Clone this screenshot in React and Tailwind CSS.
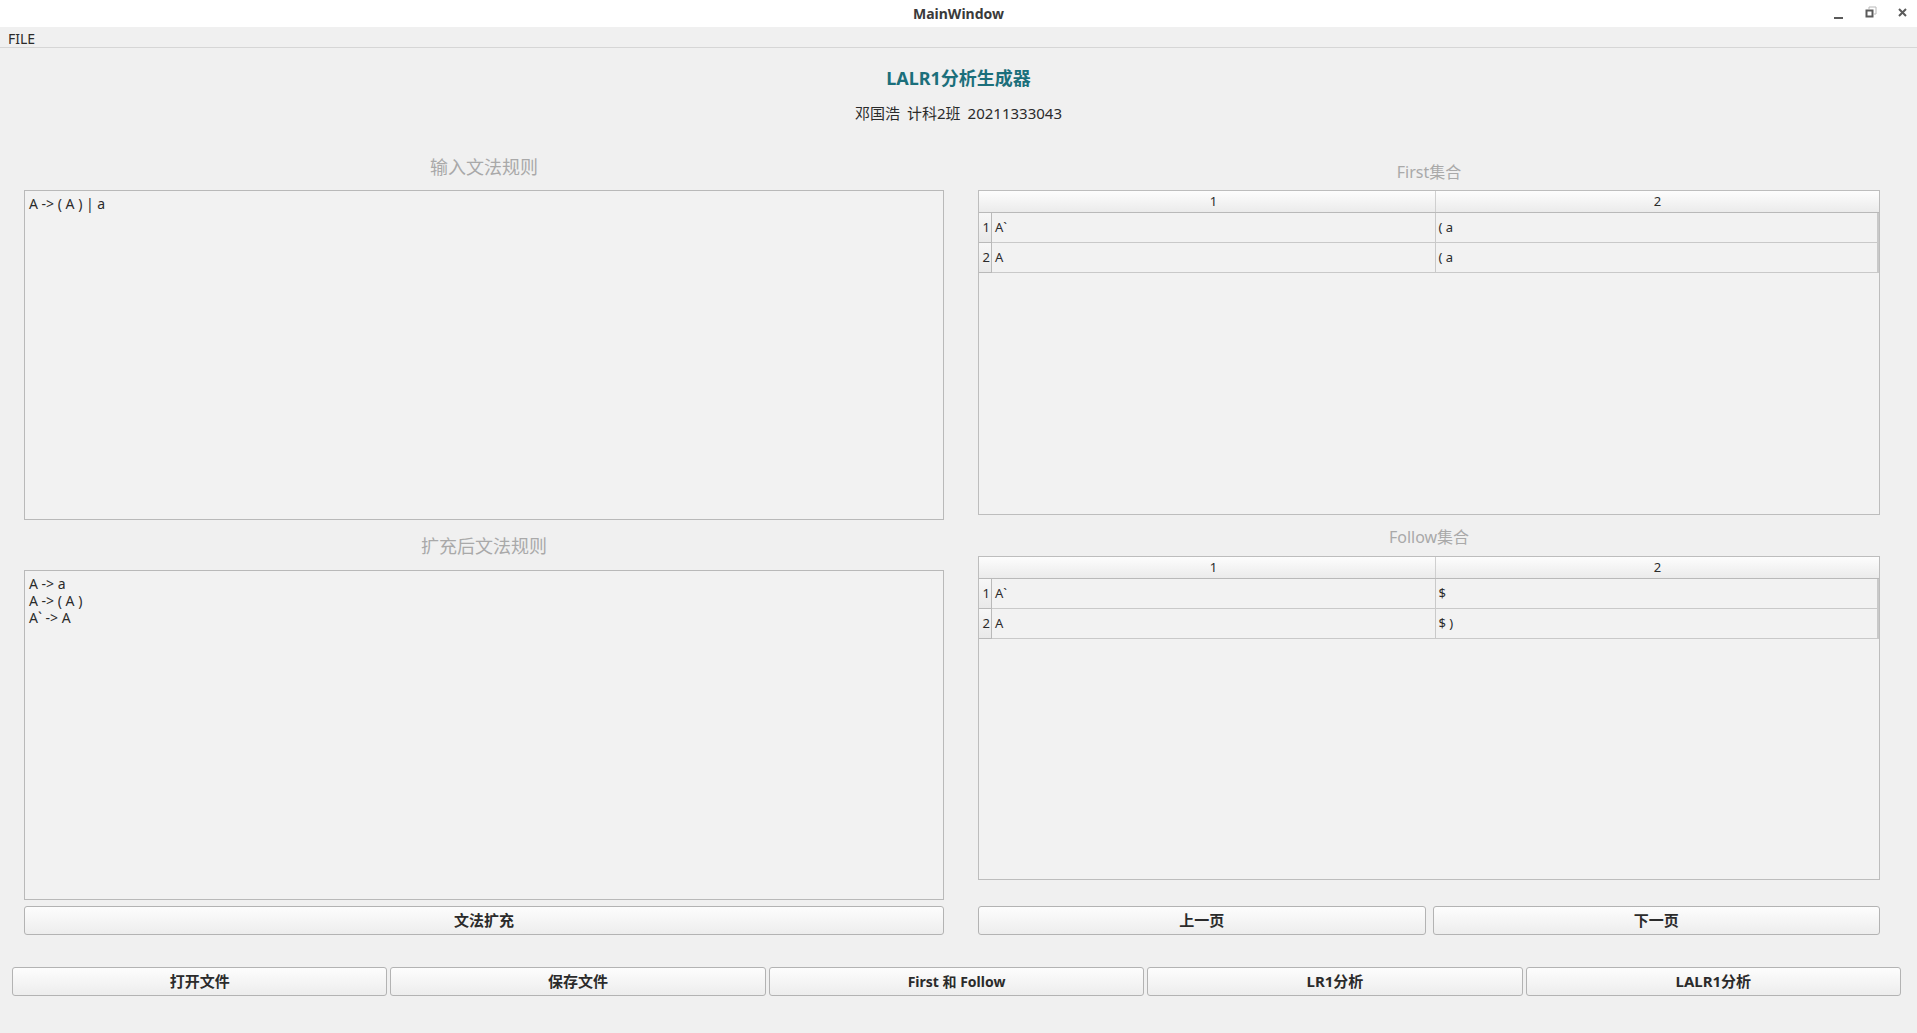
import React from "react";

const FONT = { fontFamily: '"Noto Sans", "Noto Sans CJK SC", sans-serif' };

function TitleBar() {
  return (
    <div className="grid h-[27px] shrink-0 grid-cols-[1fr_auto_1fr] items-center bg-white">
      <div />
      <div className="text-[14px] font-bold text-[#3a3a3a]">MainWindow</div>
      <div className="flex items-center justify-end gap-[20px] pr-[8px]">
        <svg width="12" height="12" viewBox="0 0 12 12" className="mt-[2px]">
          <rect x="1" y="8" width="9" height="2" fill="#5a5a5a" />
        </svg>
        <svg width="12" height="12" viewBox="0 0 12 12" className="-mt-[4px]">
          <path d="M4 3 V1 H11 V8 H9" fill="none" stroke="#b8b8b8" strokeWidth="1" />
          <rect x="1.5" y="4.5" width="6" height="6" fill="none" stroke="#5a5a5a" strokeWidth="2" />
        </svg>
        <svg width="12" height="12" viewBox="0 0 12 12" className="-mt-[2px]">
          <path d="M2 2 L9 9 M9 2 L2 9" stroke="#5a5a5a" strokeWidth="2" />
        </svg>
      </div>
    </div>
  );
}

function Button({ children, className = "" }) {
  return (
    <div
      className={
        "flex h-[29px] items-center justify-center rounded-[3px] border border-[#b3b3b3] bg-gradient-to-b from-[#fdfdfd] to-[#ededed] font-bold text-[#2b2b2b] " +
        className
      }
    >
      {children}
    </div>
  );
}

function Table({ rows, height }) {
  return (
    <div className={"flex flex-col border border-[#bdbdbd] bg-[#f2f2f2] " + height}>
      <div className="flex h-[22px] shrink-0 border-b border-[#b9b9b9] bg-gradient-to-b from-[#fdfdfd] to-[#ebebeb] text-[13px] text-[#2b2b2b]">
        <div className="w-[13px] shrink-0" />
        <div className="flex w-[444px] items-center justify-center border-r border-[#cfcfcf]">1</div>
        <div className="flex flex-1 items-center justify-center">2</div>
      </div>
      {rows.map((r, i) => (
        <div key={i} className="flex h-[30px] shrink-0 text-[13px] text-[#2b2b2b]">
          <div className="flex w-[13px] shrink-0 items-center justify-end border-r border-b border-[#b9b9b9] bg-gradient-to-b from-[#f7f7f7] to-[#e9e9e9] pr-[1px]">
            {i + 1}
          </div>
          <div className="flex w-[444px] items-center border-r border-b border-[#c9c9c9] pl-[3px]">{r[0]}</div>
          <div className="flex w-[444px] items-center border-r-2 border-b border-[#c9c9c9] pl-[3px]">{r[1]}</div>
        </div>
      ))}
    </div>
  );
}

function TextBox({ lines, className = "" }) {
  return (
    <div
      className={
        "h-[330px] border border-[#b9b9b9] bg-[#f2f2f2] px-[4px] pt-[4px] text-[14px] leading-[17px] text-[#2b2b2b] " +
        className
      }
    >
      {lines.map((l, i) => (
        <div key={i} className="whitespace-pre">{l}</div>
      ))}
    </div>
  );
}

export default function App() {
  return (
    <div className="flex h-[1033px] w-[1917px] flex-col overflow-hidden bg-[#f0f0f0]" style={FONT}>
      <TitleBar />
      <div className="flex h-[21px] shrink-0 items-center border-b border-[#d6d6d6] px-[8px] pt-[2px] text-[14px] text-[#2b2b2b]">
        FILE
      </div>
      <div className="mt-[18px] flex h-[24px] items-center justify-center text-[18px] font-bold text-[#1b6f7b]">
        LALR1分析生成器
      </div>
      <div className="mt-[13px] flex h-[20px] items-center justify-center gap-[7px] text-[15px] text-[#2b2b2b]">
        <span>邓国浩</span>
        <span>计科2班</span>
        <span>20211333043</span>
      </div>
      <div className="mt-[27px] flex pl-[24px] pr-[37px]">
        <div className="flex w-[920px] flex-col">
          <div className="flex h-[34px] items-center justify-center text-[18px] text-[#a9a9a9]">输入文法规则</div>
          <TextBox className="mt-[6px]" lines={["A -> ( A ) | a"]} />
          <div className="flex h-[50px] items-center justify-center pt-[3px] text-[18px] text-[#a9a9a9]">扩充后文法规则</div>
          <TextBox lines={["A -> a", "A -> ( A )", "A` -> A"]} />
          <Button className="mt-[6px] text-[15px]">文法扩充</Button>
        </div>
        <div className="ml-[34px] flex w-[902px] flex-col">
          <div className="flex h-[40px] items-center justify-center pt-[4px] text-[16px] text-[#a9a9a9]">First集合</div>
          <Table rows={[["A`", "( a"], ["A", "( a"]]} height="h-[325px]" />
          <div className="flex h-[41px] items-center justify-center pt-[3px] text-[16px] text-[#a9a9a9]">Follow集合</div>
          <Table rows={[["A`", "$"], ["A", "$ )"]]} height="h-[324px]" />
          <div className="mt-[26px] flex gap-[7px]">
            <Button className="flex-1 text-[15px]">上一页</Button>
            <Button className="flex-1 text-[15px]">下一页</Button>
          </div>
        </div>
      </div>
      <div className="mt-[32px] flex gap-[3px] pl-[12px] pr-[16px]">
        <Button className="flex-1 text-[15px]">打开文件</Button>
        <Button className="flex-1 text-[15px]">保存文件</Button>
        <Button className="flex-1 text-[14px]">First 和 Follow</Button>
        <Button className="flex-1 text-[15px]">LR1分析</Button>
        <Button className="flex-1 text-[15px]">LALR1分析</Button>
      </div>
    </div>
  );
}
